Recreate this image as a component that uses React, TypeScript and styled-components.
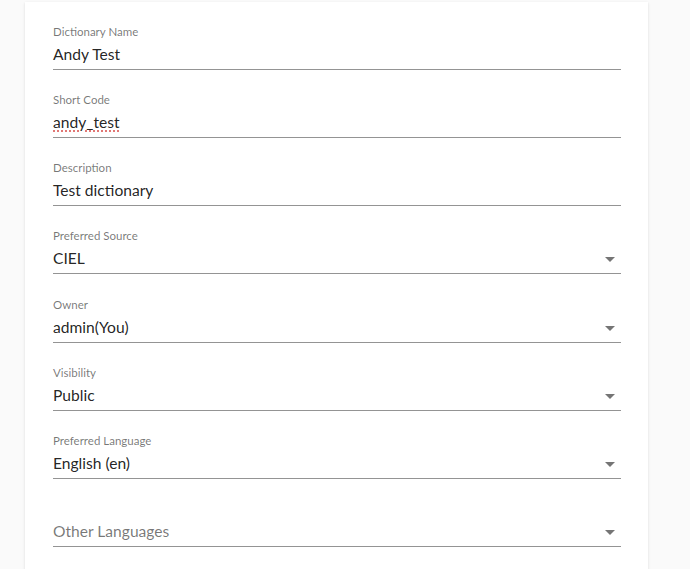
import styled, { createGlobalStyle } from "styled-components";

const GlobalStyle = createGlobalStyle`
  html, body {
    margin: 0;
    padding: 0;
    background: #fafafa;
  }
  body {
    font-family: "Lato", "Open Sans", sans-serif;
  }
`;

type FieldData = {
  label: string;
  value: string;
  select?: boolean;
  misspelled?: boolean;
  placeholder?: boolean;
};

const fields: FieldData[] = [
  { label: "Dictionary Name", value: "Andy Test" },
  { label: "Short Code", value: "andy_test", misspelled: true },
  { label: "Description", value: "Test dictionary" },
  { label: "Preferred Source", value: "CIEL", select: true },
  { label: "Owner", value: "admin(You)", select: true },
  { label: "Visibility", value: "Public", select: true },
  { label: "Preferred Language", value: "English (en)", select: true },
  { label: "", value: "Other Languages", select: true, placeholder: true },
];

const ArrowDropDown = () => (
  <svg width="24" height="24" viewBox="0 0 24 24">
    <path d="M7 10l5 5 5-5z" fill="rgba(0,0,0,0.54)" />
  </svg>
);

const App = () => {
  return (
    <PageStyled>
      <GlobalStyle />
      <CardStyled>
        {fields.map((f, i) => (
          <FieldStyled key={i}>
            <LabelStyled>{f.label}</LabelStyled>
            <InputRowStyled>
              <ValueStyled $placeholder={f.placeholder} $misspelled={f.misspelled}>
                {f.value}
              </ValueStyled>
              {f.select && (
                <IconStyled>
                  <ArrowDropDown />
                </IconStyled>
              )}
            </InputRowStyled>
          </FieldStyled>
        ))}
      </CardStyled>
    </PageStyled>
  );
};

const PageStyled = styled.div`
  display: flex;
  padding: 2px 0 0 25px;
  min-height: 569px;
  box-sizing: border-box;
`;

const CardStyled = styled.div`
  display: flex;
  flex-direction: column;
  gap: 22.15px;
  width: 623px;
  box-sizing: border-box;
  padding: 22px 28px 40px 28px;
  background-color: #ffffff;
  box-shadow: 0 1px 3px rgba(0, 0, 0, 0.1), 0 1px 1px rgba(0, 0, 0, 0.06);
`;

const FieldStyled = styled.div`
  display: flex;
  flex-direction: column;
`;

const LabelStyled = styled.div`
  height: 16px;
  font-size: 11.5px;
  line-height: 16px;
  color: rgba(0, 0, 0, 0.54);
`;

const InputRowStyled = styled.div`
  display: flex;
  align-items: flex-start;
  justify-content: space-between;
  height: 20px;
  margin-top: 4px;
  padding-bottom: 5px;
  border-bottom: 1px solid #949494;
  margin-right: -1px;
`;

const ValueStyled = styled.span<{ $placeholder?: boolean; $misspelled?: boolean }>`
  font-size: 15.6px;
  line-height: 20px;
  color: ${(p) => (p.$placeholder ? "rgba(0, 0, 0, 0.54)" : "rgba(0, 0, 0, 0.87)")};
  text-decoration: ${(p) => (p.$misspelled ? "underline dotted #d9534f" : "none")};
  text-underline-offset: 3px;
`;

const IconStyled = styled.div`
  display: flex;
  width: 24px;
  height: 24px;
  margin: -1px -1px -5px 0;
`;

export default App;
